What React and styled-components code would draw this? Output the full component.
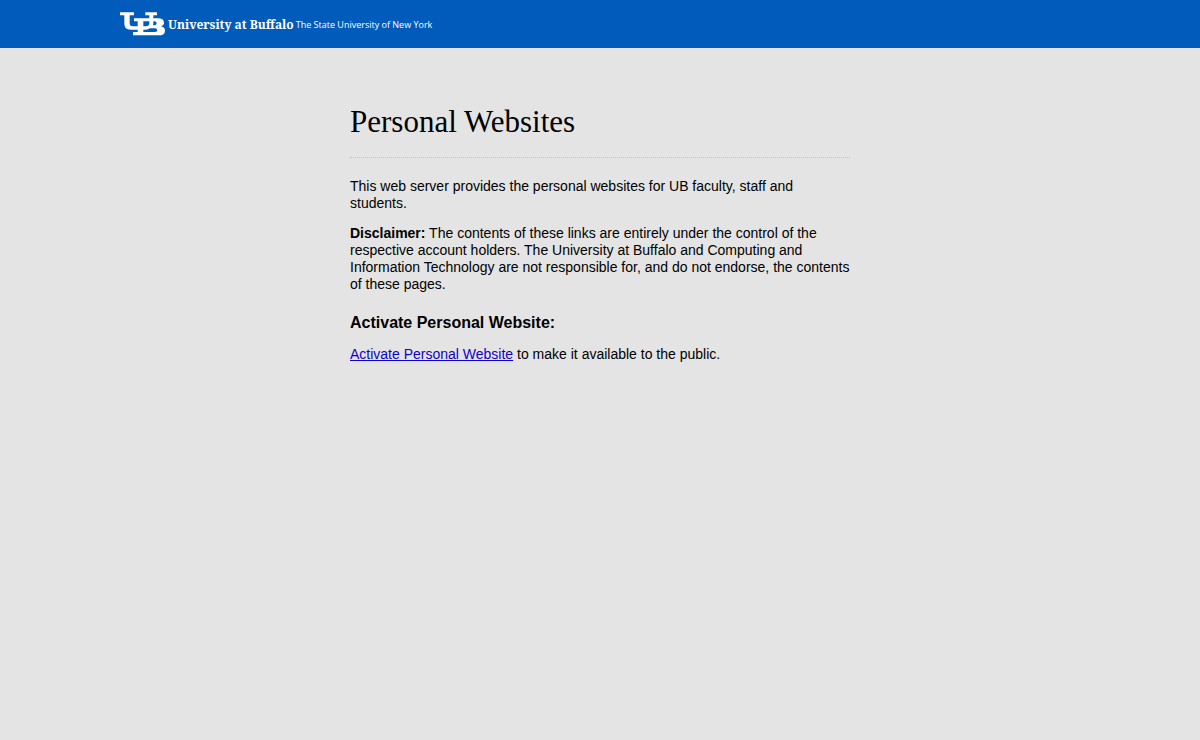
import React from 'react'
import styled, { createGlobalStyle } from 'styled-components'


const GlobalStyle = createGlobalStyle`
    body {
        margin: 0;
        background-color: #e4e4e4;
        color: #000;
        font-family: Arial, "Liberation Sans", sans-serif;
        font-size: 14px;
        line-height: 17px;
    }
`

const Header = styled.header`
    background-color: #005bbb;
`

const HeaderInner = styled.div`
    box-sizing: border-box;
    max-width: 960px;
    height: 48px;
    margin: 0 auto;
    display: flex;
    align-items: center;
    color: white;
    white-space: nowrap;
`

const Mark = styled.svg`
    width: 45px;
    height: 24px;
    margin-right: 3px;
    fill: white;
`

const SchoolName = styled.span`
    font-family: "Noto Serif", "DejaVu Serif Condensed", "DejaVu Serif", serif;
    font-size: 12px;
    font-weight: bold;
    margin-right: 2px;
`

const Tagline = styled.span`
    font-family: "Open Sans", "Noto Sans", sans-serif;
    font-size: 9px;
    font-weight: 500;
`

const Content = styled.main`
    max-width: 500px;
    margin: 0 auto;
    padding-top: 56px;
`

const Title = styled.h1`
    margin: 0 0 20px;
    padding-bottom: 17px;
    border-bottom: 1px dotted #c0c0c0;
    font-family: Georgia, "Liberation Serif", serif;
    font-size: 31px;
    font-weight: normal;
    line-height: 36px;
`

const Subtitle = styled.h2`
    margin: 21px 0 14px;
    font-size: 16px;
    line-height: 18px;
`

const Text = styled.p`
    margin: 0 0 13px;
`

const TextLink = styled.a`
    color: #0f00cc;
`

const Logo = () => (
    <Mark viewBox="0 0 135 72" aria-hidden="true">
        <path d="M0 1H42V10H29V34Q29 43 39 43H53V28H42V19H88V10H76V1H111V10H100V19H113Q132 19 132 32Q132 40 123 43Q135 46 135 56Q135 70 116 70H39V60H53V53H32Q13 53 13 36V10H0ZM70 28V43H77Q88 43 88 34V28ZM100 28V34Q100 38 98 40H103Q110 40 110 34Q110 28 103 28ZM70 53V60H105Q112 60 112 55Q112 49 105 49H90Q85 53 77 53Z" fillRule="evenodd" />
    </Mark>
)

export default class App extends React.Component {
    render() {
        return (
            <>
                <GlobalStyle />
                <Header>
                    <HeaderInner>
                        <Logo />
                        <SchoolName>University at Buffalo</SchoolName>
                        <Tagline>The State University of New York</Tagline>
                    </HeaderInner>
                </Header>
                <Content>
                    <Title>Personal Websites</Title>
                    <Text>This web server provides the personal websites for UB faculty, staff and students.</Text>
                    <Text>
                        <strong>Disclaimer:</strong> The contents of these links are entirely under the control
                        of the respective account holders. The University at Buffalo and Computing and Information
                        Technology are not responsible for, and do not endorse, the contents of these pages.
                    </Text>
                    <Subtitle>Activate Personal Website:</Subtitle>
                    <Text>
                        <TextLink href="#activate">Activate Personal Website</TextLink> to make it available to the public.
                    </Text>
                </Content>
            </>
        )
    }
}
